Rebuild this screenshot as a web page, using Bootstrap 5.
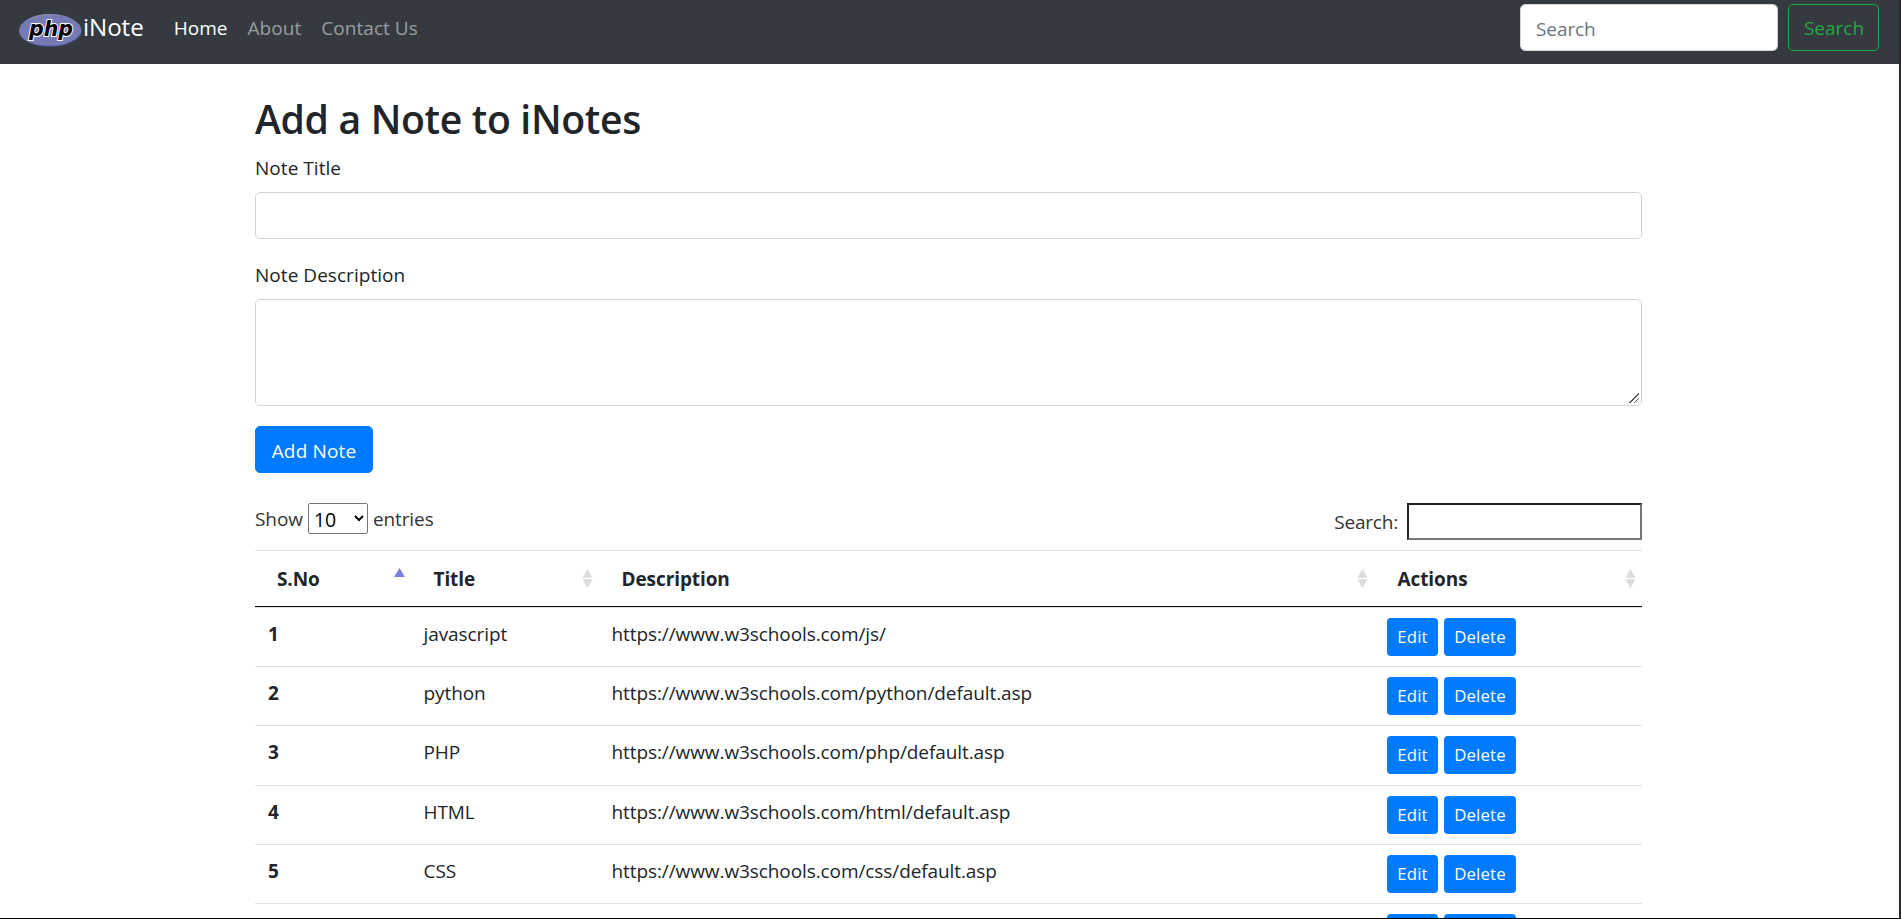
<!DOCTYPE html>
<html lang="en">
<head>
<meta charset="utf-8">
<meta name="viewport" content="width=device-width, initial-scale=1">
<title>iNotes</title>
<link href="https://cdn.jsdelivr.net/npm/bootstrap@5.3.0/dist/css/bootstrap.min.css" rel="stylesheet">
<style>
html{font-size:20px}
body{font-family:"Open Sans","Noto Sans",sans-serif;font-size:19px;line-height:30px;letter-spacing:-.09px;color:#212529;height:919px;overflow:hidden;border-right:2px solid #2b2b2b;border-bottom:1px solid #000}
input,select,textarea,button{letter-spacing:inherit}
.topbar{background:#343a40;height:64px;padding:4px 20px 0 19px;flex:none}
.navbar-brand{font-size:24.2px;color:#fff!important;line-height:46px;padding:0;margin:0 20px 0 0;height:46px}
.navbar-brand svg{margin:10px 1px 0 0}
.topbar .nav-link{color:rgba(255,255,255,.5);padding:9px 10px 0;letter-spacing:.05px}
.topbar .nav-link.active{color:#fff}
.topbar .nav-link,.topbar .navbar-nav{line-height:30px}
.form-control,.btn{font-size:19px;line-height:30px;border-radius:5px;height:47px}
.form-control{border-color:#ced4da;padding:8px 15px 6px}
.form-control::placeholder{color:#6c757d}
.topbar .form-control{width:258px}
.btn{padding:8px 0 6px;letter-spacing:.15px}
.btn-find{color:#28a745;border-color:#28a745;width:91px;padding:7px 0 6px 1px;letter-spacing:0}
.btn-primary{--bs-btn-bg:#007bff;--bs-btn-border-color:#007bff}
.page{width:1387px;margin-left:255px;padding-top:31px;min-height:0;overflow:hidden}
h2{font-size:39.2px;line-height:48px;font-weight:600;margin:0 0 10px;letter-spacing:-.35px}
.field-label{display:block;margin-bottom:9px;letter-spacing:.04px}
.field-gap{padding-top:21px}
textarea.form-control{height:107px}
textarea::-webkit-resizer{background:linear-gradient(135deg,transparent 0 50%,#555 50% 57%,transparent 57% 71%,#555 71% 79%,transparent 79%) 3px 3px/10px 10px no-repeat}
.btn-add{width:118px}
.tools{color:#333;margin-top:30px;height:47px}
.tools .shown{line-height:32px}
.tools select{width:60px;height:31px;font-size:19.5px;line-height:normal;margin:0 5px;padding:1px 1px 0;border:1px solid #767676;border-radius:2px;background:#fff;color:#000}
.tools input{width:235px;height:37px;border:2px inset #767676;margin-left:9px;background:#fff}
.tools .finder{letter-spacing:-.2px}
.notes{width:1387px;table-layout:fixed;border-collapse:separate;border-spacing:0;margin:0;color:#212529}
.notes th,.notes td{border:0;vertical-align:top}
.notes thead th{height:57px;border-top:1px solid #dee2e6;border-bottom:1px solid #111;padding:13px 7px 0 22px;font-weight:700}
.notes thead svg{margin-top:5px}
.notes thead th:first-child svg{margin-top:4px}
.notes thead th:last-child{padding:13px 6px 0 23px}
.notes tbody td,.notes tbody th{height:59.2px;border-top:1px solid #dee2e6;padding:10px 12px 0 12.5px}
.notes tbody .txt{padding-top:11px;padding-left:12px}
.notes tbody th.txt{padding-left:13px}
.btn-row{height:38px;font-size:16.8px;line-height:26px;padding:6px 0;border-radius:4px;border:0;width:51px;vertical-align:top}
.btn-del{width:72px;margin-left:6px}
</style>
</head>
<body class="d-flex flex-column">
<nav class="topbar d-flex align-items-start">
  <a class="navbar-brand d-flex" href="#">
    <svg width="63" height="33" viewBox="0 0 63 33">
      <defs><linearGradient id="g" x1="0" y1="0" x2=".3" y2="1"><stop offset="0" stop-color="#aeb2d5"/><stop offset=".25" stop-color="#777bb3"/><stop offset=".8" stop-color="#777bb3"/><stop offset="1" stop-color="#484c89"/></linearGradient></defs>
      <ellipse cx="31.2" cy="16.5" rx="31.2" ry="16.4" fill="url(#g)"/><ellipse cx="31.2" cy="16.5" rx="30" ry="15.3" fill="#777bb3"/>
      <text x="10" y="21.5" textLength="44" lengthAdjust="spacingAndGlyphs" font-family="DejaVu Sans" font-style="italic" font-weight="bold" font-size="21" letter-spacing="0" fill="#000" stroke="#fff" stroke-width="2" paint-order="stroke">php</text>
    </svg><span>iNote</span></a>
  <div class="navbar-nav flex-row me-auto">
    <a class="nav-link active" href="#">Home</a><a class="nav-link" href="#">About</a><a class="nav-link" href="#">Contact Us</a>
  </div>
  <form class="d-flex gap-2"><input class="form-control" type="search" placeholder="Search"><button class="btn btn-find" type="button">Search</button></form>
</nav>
<main class="page">
  <h2>Add a Note to iNotes</h2>
  <form>
    <label class="field-label" for="title">Note Title</label>
    <input class="form-control" id="title">
    <label class="field-label field-gap" for="desc">Note Description</label>
    <textarea class="form-control" id="desc"></textarea>
    <button class="btn btn-primary btn-add mt-3" type="button">Add Note</button>
  </form>
  <div class="tools d-flex justify-content-between align-items-start">
    <label class="d-flex shown">Show <select><option>10</option><option>25</option></select> entries</label>
    <label class="d-flex align-items-center finder">Search:<input type="search"></label>
  </div>
  <table class="table notes">
    <colgroup><col style="width:156.5px"><col style="width:188px"><col style="width:775px"><col style="width:267.5px"></colgroup>
    <thead><tr>
      <th><div class="d-flex justify-content-between">S.No<svg width="11" height="19" viewBox="0 0 11 19"><path d="M0 9 5.5 0 11 9z" fill="#7b80dc"/></svg></div></th>
      <th><div class="d-flex justify-content-between">Title<svg width="11" height="19" viewBox="0 0 11 19"><path d="M.5 8.7 5.5 0l5 8.7zM.5 10.3l5 8.7 5-8.7z" fill="#dcdcdc"/></svg></div></th>
      <th><div class="d-flex justify-content-between">Description<svg width="11" height="19" viewBox="0 0 11 19"><path d="M.5 8.7 5.5 0l5 8.7zM.5 10.3l5 8.7 5-8.7z" fill="#dcdcdc"/></svg></div></th>
      <th><div class="d-flex justify-content-between">Actions<svg width="11" height="19" viewBox="0 0 11 19"><path d="M.5 8.7 5.5 0l5 8.7zM.5 10.3l5 8.7 5-8.7z" fill="#dcdcdc"/></svg></div></th>
    </tr></thead>
    <tbody>
      <tr><th class="txt">1</th><td class="txt">javascript</td><td class="txt">https://www.w3schools.com/js/</td><td><button class="btn btn-primary btn-row">Edit</button><button class="btn btn-primary btn-row btn-del">Delete</button></td></tr>
      <tr><th class="txt">2</th><td class="txt">python</td><td class="txt">https://www.w3schools.com/python/default.asp</td><td><button class="btn btn-primary btn-row">Edit</button><button class="btn btn-primary btn-row btn-del">Delete</button></td></tr>
      <tr><th class="txt">3</th><td class="txt">PHP</td><td class="txt">https://www.w3schools.com/php/default.asp</td><td><button class="btn btn-primary btn-row">Edit</button><button class="btn btn-primary btn-row btn-del">Delete</button></td></tr>
      <tr><th class="txt">4</th><td class="txt">HTML</td><td class="txt">https://www.w3schools.com/html/default.asp</td><td><button class="btn btn-primary btn-row">Edit</button><button class="btn btn-primary btn-row btn-del">Delete</button></td></tr>
      <tr><th class="txt">5</th><td class="txt">CSS</td><td class="txt">https://www.w3schools.com/css/default.asp</td><td><button class="btn btn-primary btn-row">Edit</button><button class="btn btn-primary btn-row btn-del">Delete</button></td></tr>
      <tr><th></th><td></td><td></td><td><button class="btn btn-primary btn-row" aria-label="Edit"></button><button class="btn btn-primary btn-row btn-del" aria-label="Delete"></button></td></tr>
    </tbody>
  </table>
</main>
<script src="https://cdn.jsdelivr.net/npm/bootstrap@5.3.0/dist/js/bootstrap.bundle.min.js"></script>
</body>
</html>
